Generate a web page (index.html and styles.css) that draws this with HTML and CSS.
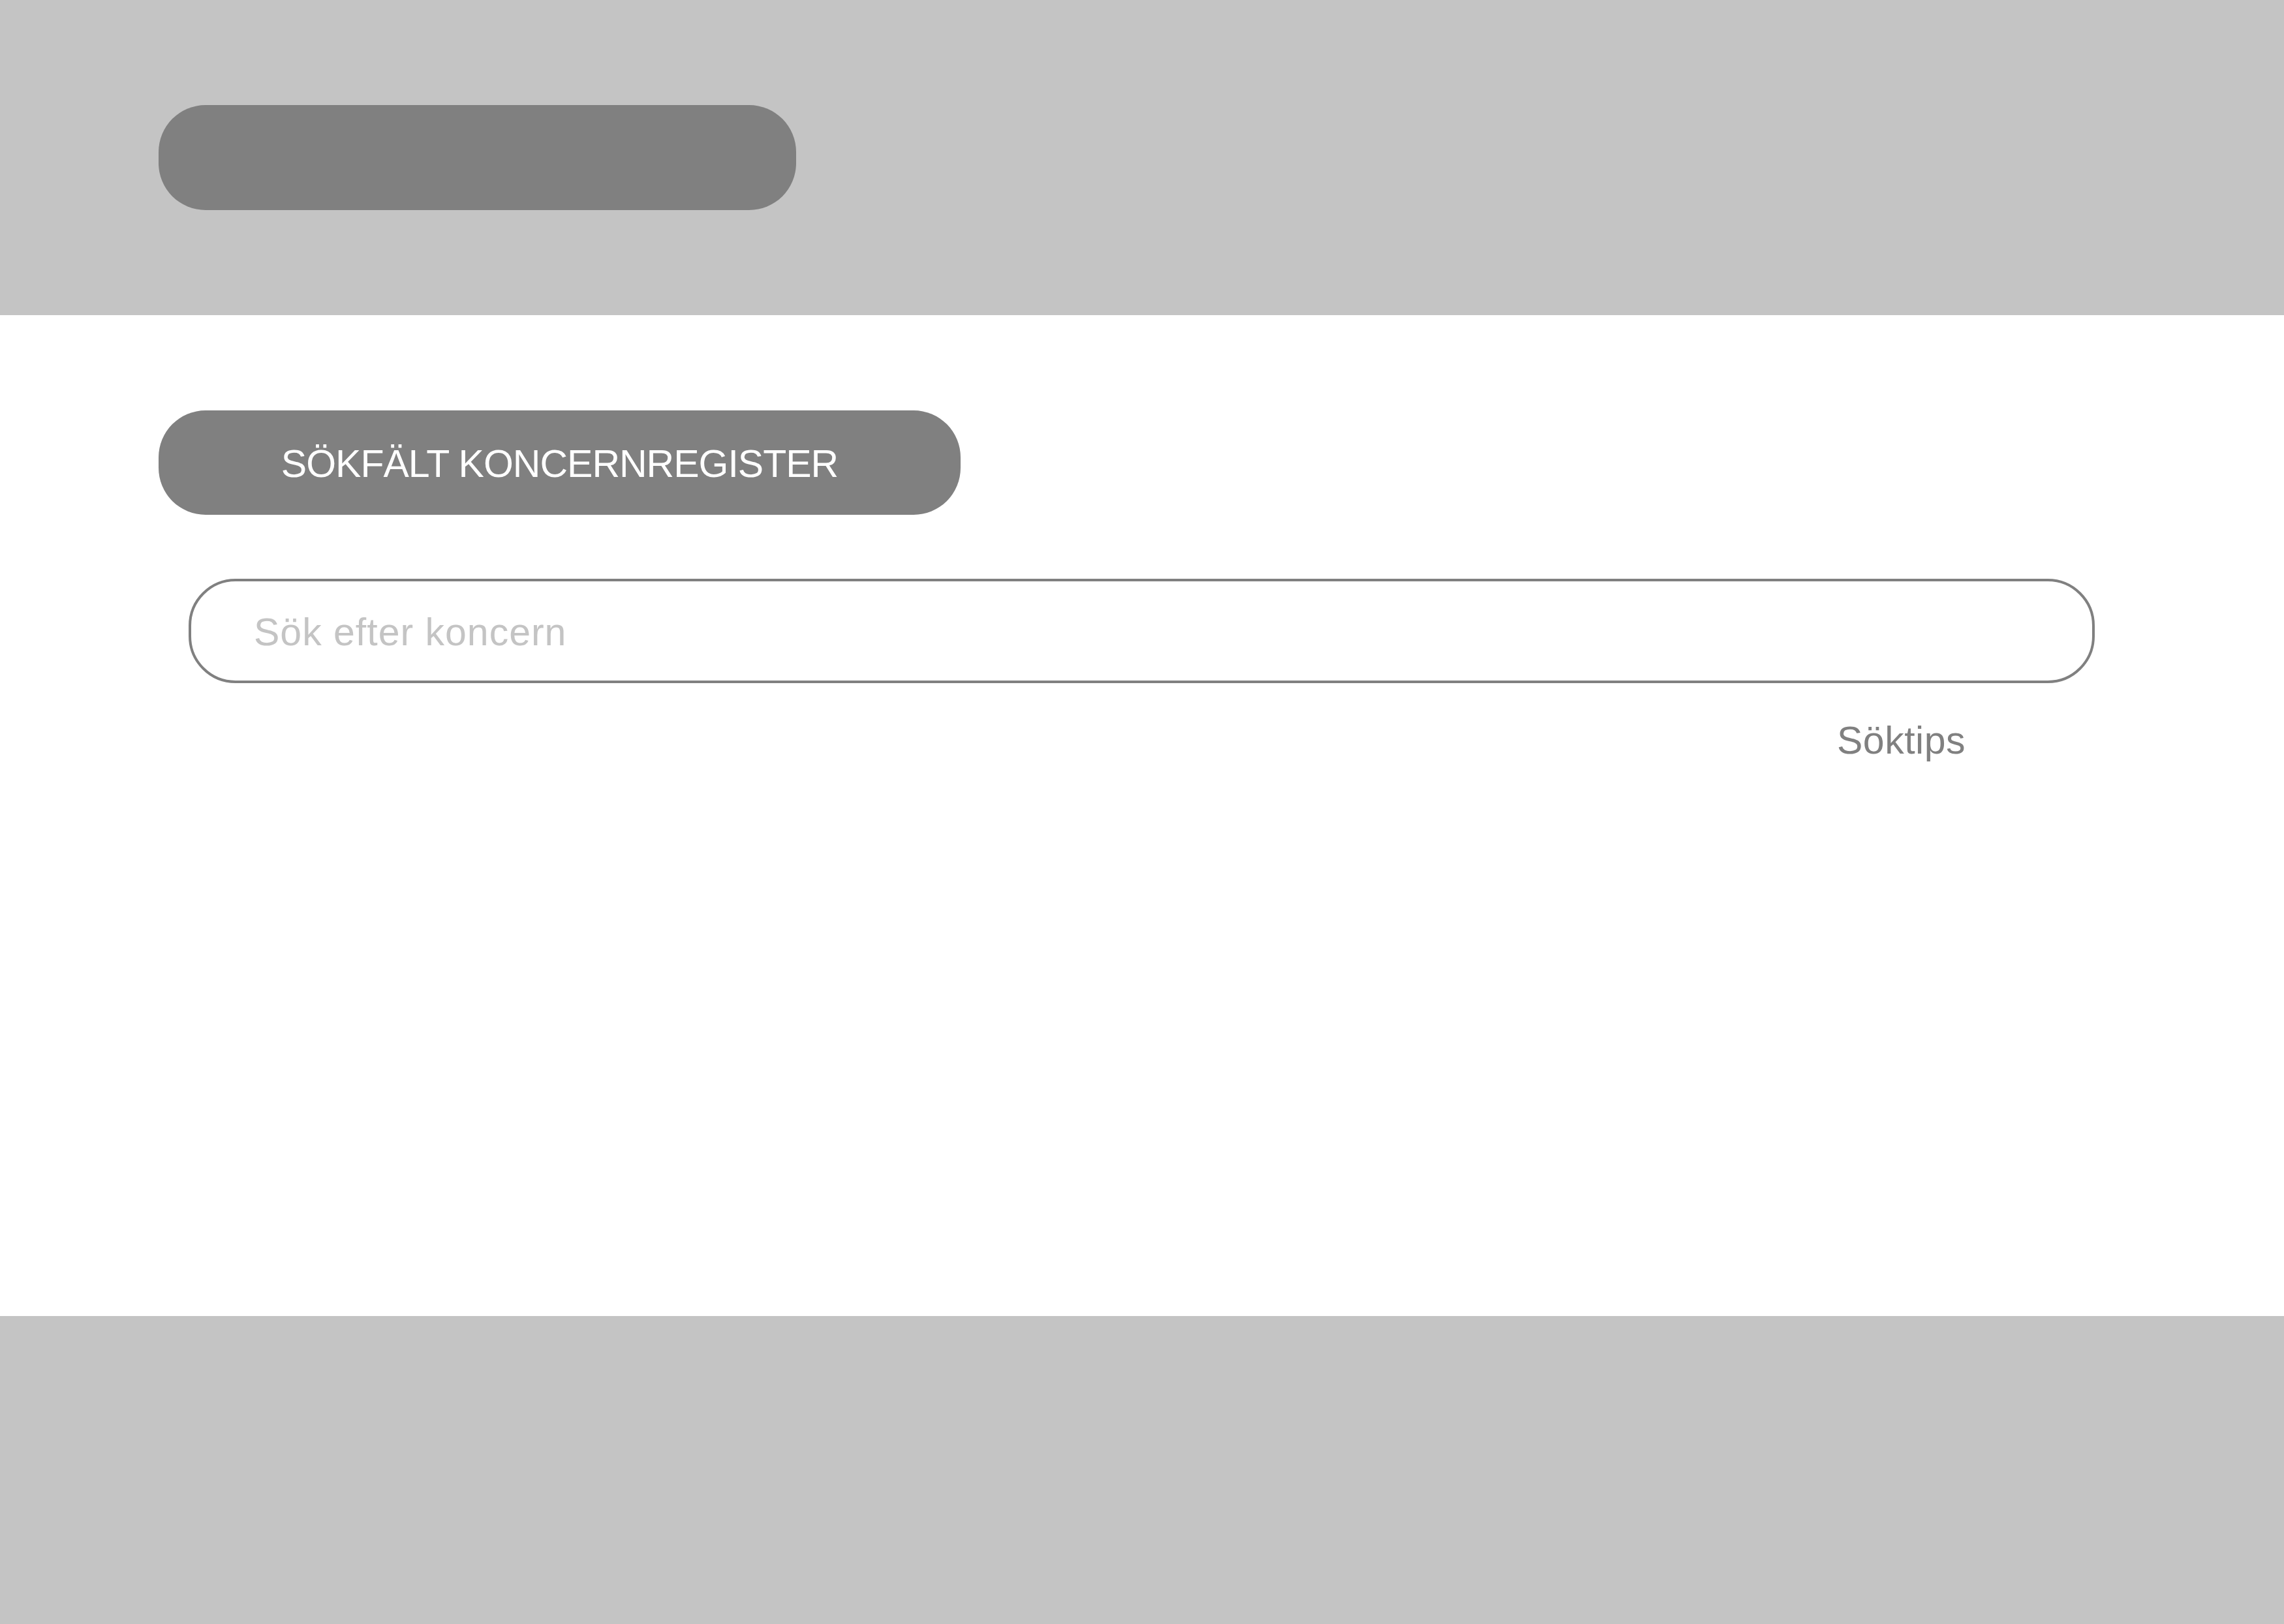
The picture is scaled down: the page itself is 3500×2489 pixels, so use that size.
FILE: index.html
```html
<!DOCTYPE html>
<html lang="sv">
<head>
    <meta charset="UTF-8">
    <meta name="viewport" content="width=device-width, initial-scale=1.0">
    <title>Koncernregister</title>
    <link rel="stylesheet" href="styles.css">
</head>
<body>
    <header class="site-header">
        <div class="logo-placeholder"></div>
    </header>
    <main class="content">
        <h1 class="page-title">SÖKFÄLT KONCERNREGISTER</h1>
        <form class="search-form" onsubmit="event.preventDefault()">
            <input type="text" class="search-input" placeholder="Sök efter koncern">
        </form>
        <div class="tips-row">
            <a href="#" class="tips-link">Söktips</a>
        </div>
    </main>
    <footer class="site-footer"></footer>
</body>
</html>
```

FILE: styles.css
```css
/* Reset */
* {
    margin: 0;
    padding: 0;
    box-sizing: border-box;
}

body {
    display: flex;
    flex-direction: column;
    min-height: 100vh;
    background-color: white;
    font-family: "Liberation Sans", Arial, sans-serif;
}

.site-header {
    height: 483px;
    padding: 161px 243px 0;
    background-color: #c4c4c4;
}

.logo-placeholder {
    width: 977px;
    height: 161px;
    border-radius: 72px;
    background-color: #808080;
}

.content {
    flex: 1;
    padding: 146px 243px 0;
}

.page-title {
    display: flex;
    align-items: center;
    justify-content: center;
    width: 1229px;
    height: 160px;
    padding-top: 3px;
    border-radius: 72px;
    background-color: #808080;
    color: white;
    font-size: 59px;
    font-weight: normal;
    letter-spacing: -1px;
}

.search-form {
    margin: 98px 47px 0 46px;
}

.search-input {
    display: block;
    width: 100%;
    height: 160px;
    padding: 3px 96px 0;
    border: 4px solid #808080;
    border-radius: 72px;
    font-family: "Liberation Sans", Arial, sans-serif;
    font-size: 59px;
    letter-spacing: 1px;
    color: #333;
    outline: none;
}

.search-input::placeholder {
    color: #c4c4c4;
}

.tips-row {
    display: flex;
    justify-content: flex-end;
    margin-top: 59px;
    padding-right: 245px;
}

.tips-link {
    font-size: 59px;
    line-height: 1;
    letter-spacing: 0.5px;
    color: #808080;
    text-decoration: none;
}

.site-footer {
    height: 472px;
    background-color: #c4c4c4;
}
```
